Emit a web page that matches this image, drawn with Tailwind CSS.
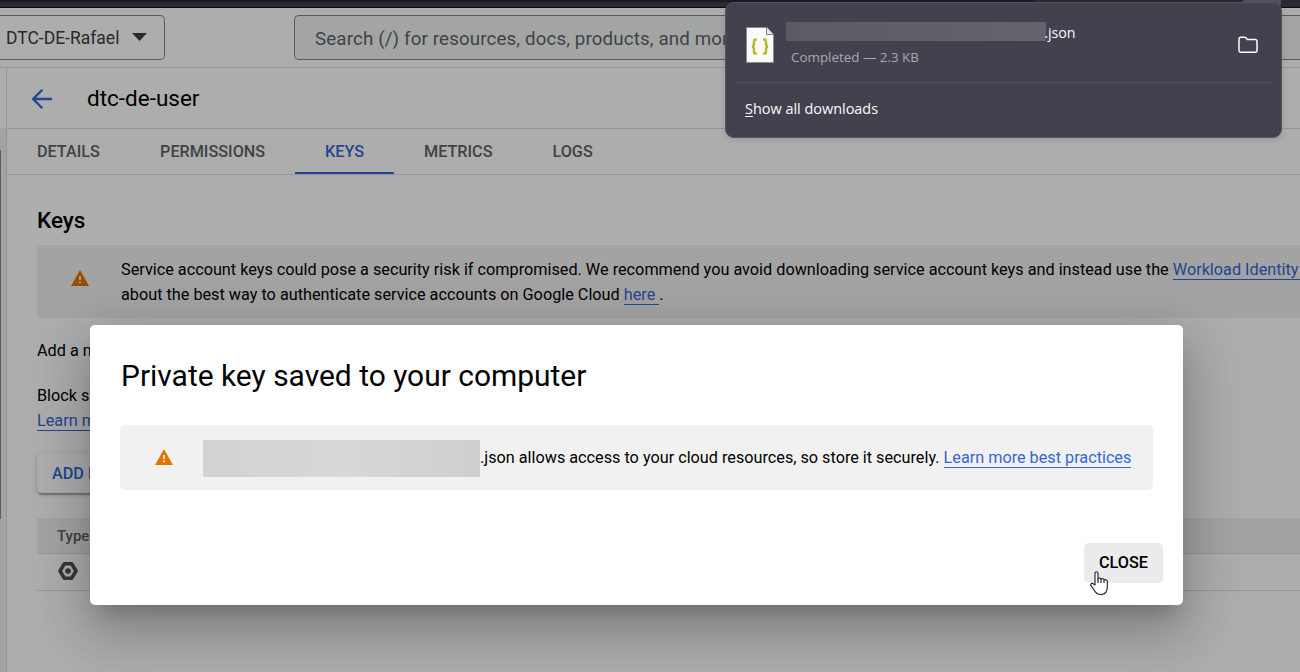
<!DOCTYPE html>
<html lang="en">
<head>
<meta charset="utf-8">
<title>dtc-de-user – Keys</title>
<script src="https://cdn.jsdelivr.net/npm/@tailwindcss/browser@4"></script>
</head>
<body class="relative flex h-[672px] w-[1300px] flex-col overflow-hidden bg-white font-['Roboto',sans-serif] text-[16.242px] leading-[25px] text-black">
  <div class="h-2 shrink-0 border-b border-[#0c0c0d] bg-[#2b2a33]"><div class="h-0.5 w-[1035px] bg-[#1c1b22]"></div></div>

  <header class="flex h-[60px] shrink-0 items-start border-b border-[#dadce0] pt-[7px]">
    <div class="flex h-[45px] w-[165px] items-center rounded-r-[5px] border border-l-0 border-[#80868b] pl-1.5 text-[17.5px] text-[#3c4043]">
      <span class="w-[126px] pt-0.5 whitespace-nowrap">DTC-DE-Rafael</span>
      <svg class="mt-[-2px] h-2 w-[15px]" viewBox="0 0 15 8"><path d="M0 0h15L7.500 8z" fill="#3c4043"/></svg>
    </div>
    <div class="ml-[129px] flex h-[45px] flex-1 items-center rounded-l-[5px] border border-r-0 border-[#80868b] bg-[#f1f3f4] pt-[3px] pl-5 text-[18.75px] tracking-[0.13px] text-[#5f6368]">
      <span class="whitespace-nowrap">Search (/) for resources, docs, products, and more</span>
    </div>
  </header>

  <div class="flex min-h-0 flex-1">
    <aside class="flex w-[7px] shrink-0 flex-col border-r border-[#dadce0]">
      <div class="h-[60px]"></div>
      <div class="flex-1 bg-[#f0f0f0] pt-[22px]"><div class="h-[369px] w-px bg-[#8b8b8b]"></div></div>
    </aside>
    <main class="flex w-[1293px] shrink-0 flex-col overflow-hidden">
      <div class="flex h-[61px] shrink-0 items-center border-b border-[#dadce0] pl-[25px]">
        <svg class="mt-0.5 h-5 w-5" viewBox="0 0 20 20" fill="none" stroke="#3367d6" stroke-width="2.300"><path d="M20 10H2M10.300 .8L1.200 10l9.100 9.200"/></svg>
        <h1 class="ml-[35px] text-[22.5px]">dtc-de-user</h1>
      </div>
      <nav class="flex h-[46px] shrink-0 border-b border-[#dadce0] text-[16.2px] font-medium text-[#5f6368] [&>a]:flex [&>a]:h-[45px] [&>a]:items-center [&>a]:px-[30px]">
        <a>DETAILS</a>
        <a class="ml-[0.2px]">PERMISSIONS</a>
        <a class="border-b-2 border-[#3367d6] pt-0.5 text-[#3367d6]">KEYS</a>
        <a>METRICS</a>
        <a>LOGS</a>
      </nav>
      <section class="flex flex-col pl-[30px]">
        <h2 class="mt-[33px] text-[22.5px] font-medium">Keys</h2>
        <div class="mt-3 flex h-[73px] w-[1400px] items-center rounded-[5px] bg-[#f1f1f1] pl-[33.5px]">
          <svg class="mt-[-7px] h-4 w-[18px] shrink-0" viewBox="0 0 18 16"><path d="M9 0l9 16H0z" fill="#e37400"/><path d="M8.100 6h1.800v4H8.100zM8.100 11.500h1.800v1.800H8.100z" fill="#f1f1f1"/></svg>
          <p class="ml-[32.5px] whitespace-nowrap">Service account keys could pose a security risk if compromised. We recommend you avoid downloading service account keys and instead use the <a class="border-b border-[#3367d6] text-[#3367d6]">Workload Identity Federation</a><br>about the best way to authenticate service accounts on Google Cloud <a class="border-b border-[#3367d6] text-[#3367d6]">here&nbsp;</a>.</p>
        </div>
        <p class="mt-5">Add a new key</p>
        <p class="mt-5">Block service<br><a class="border-b border-[#3367d6] text-[#3367d6]">Learn more</a></p>
        <button class="mt-5 flex h-10 w-[140px] items-center rounded-[5px] bg-white pl-[15px] font-medium text-[#3367d6] shadow-[0_4px_1px_-2px_rgba(0,0,0,.2),0_2px_3px_0_rgba(0,0,0,.14),0_1px_6px_0_rgba(0,0,0,.12)]">ADD KEY</button>
        <div class="mt-[25px] flex h-9 items-center border-b border-[#dadce0] bg-[#f1f1f1] pt-0.5 pl-5 text-[15px] font-medium text-[#5f6368]">Type</div>
        <div class="flex h-[37px] items-center border-b border-[#dadce0] pb-0.5 pl-[21px]">
          <svg class="h-[18px] w-5" viewBox="0 0 20 18"><path d="M6.300 1.800h7.400L18 9l-4.300 7.200H6.300L2 9z" fill="none" stroke="#505050" stroke-width="3.600" stroke-linejoin="round"/><circle cx="10" cy="9" r="2.800" fill="#505050"/></svg>
        </div>
      </section>
    </main>
  </div>

  <div class="absolute inset-x-0 top-2 bottom-0 bg-black/32"></div>

  <div class="absolute top-[325px] left-[90px] flex h-[280px] w-[1093px] flex-col rounded-[5px] bg-white pl-[30px] shadow-[0_14px_19px_-9px_rgba(0,0,0,.2),0_30px_48px_4px_rgba(0,0,0,.14),0_11px_58px_10px_rgba(0,0,0,.12)]" role="dialog">
    <h2 class="mt-8 pl-px text-[29.95px] leading-[38px]">Private key saved to your computer</h2>
    <div class="mt-[30px] flex h-[65px] w-[1033px] items-center rounded-[5px] bg-[#f1f1f1] pl-[34.5px]">
      <svg class="mt-[-2px] h-4 w-[18px] shrink-0" viewBox="0 0 18 16"><path d="M9 0l9 16H0z" fill="#e37400"/><path d="M8.100 6h1.800v4H8.100zM8.100 11.500h1.800v1.800H8.100z" fill="#f1f1f1"/></svg>
      <div class="mt-0.5 ml-[30.5px] h-[37px] w-[277px] bg-linear-to-r from-[#d2d2d2] via-[#d8d8d8] to-[#cecece]"></div>
      <p class="text-[16.225px] whitespace-nowrap">.json allows access to your cloud resources, so store it securely. <a class="border-b border-[#3367d6] text-[#3367d6]">Learn more best practices</a></p>
    </div>
    <button class="mt-[53px] mr-5 flex h-10 w-[79px] items-center justify-center self-end rounded-[5px] bg-[#ebebeb] pb-0.5 font-medium">CLOSE</button>
  </div>

  <svg class="absolute top-[571px] left-[1090px] h-6 w-[18px]" viewBox="0 0 18 24"><path d="M5 14V2.200C5 .3 8 .3 8 2.200V8c.3-1.400 3-1.300 3 .4 .5-1.200 3-1 3 .8 .7-1 3.300-.6 3.300 1.200V16c0 4.500-2.500 7.500-6.600 7.500-3.400 0-5-1.500-6.300-4L.9 14.400C.2 12.800 2.300 11.600 3.500 13z" fill="#fff" stroke="#1c1b2e" stroke-width="1.100" stroke-linejoin="round"/><path d="M8 7.500V12M11 8.500V12M14 9.500V12" stroke="#1c1b2e" stroke-width="1.100"/></svg>

  <div class="absolute top-0 left-[1243px] h-2 w-[38px] rounded-b-[5px] bg-[#52525e]"></div>
  <div class="absolute top-0.5 left-[725px] flex h-[136px] w-[557px] flex-col rounded-[9px] border border-[#52525e] bg-[#42414d] px-[9px] font-['Open_Sans','Noto_Sans',sans-serif] text-[#fbfbfe] shadow-[0_2px_6px_rgba(0,0,0,.12)]">
    <div class="flex h-20 border-b border-[#52525e]">
      <svg class="mt-6 ml-[11px] h-9 w-7" viewBox="0 0 28 36"><path d="M.5 .5h20.500L27.500 7.500V35.500H.5z" fill="#fafafa" stroke="#8c8c88"/><path d="M20.500 .5v7h7" fill="#e8e8e8" stroke="#85857f"/><path d="M10.800 12.500H10c-1.500 0-2 .8-2 2v2.500c0 1.500-.6 2.300-2 2.500 1.400 .2 2 1 2 2.500v2.500c0 1.300 .5 2 2 2h.8M17.200 12.500h.8c1.500 0 2 .8 2 2v2.500c0 1.500 .6 2.300 2 2.500-1.400 .2-2 1-2 2.500v2.500c0 1.300-.5 2-2 2h-.8" fill="none" stroke="#b5b82e" stroke-width="2.400"/></svg>
      <div class="ml-3 flex flex-col">
        <div class="mt-[19px] flex h-[19px] items-center text-[14.3px]"><span class="h-[19px] w-[260px] bg-linear-to-r from-[#5b5a65] to-[#64636e]"></span><span class="-ml-[1.5px] mt-px tracking-[-0.15px]">.json</span></div>
        <div class="mt-1.5 pl-[5px] text-[13.4px] leading-5 text-[#a9a8b0]">Completed — 2.3 KB</div>
      </div>
      <svg class="mt-[33px] mr-[14.5px] ml-auto h-[18px] w-5" viewBox="0 0 20 18" fill="none" stroke="#fbfbfe" stroke-width="1.500" stroke-linejoin="round"><path d="M1 3.200C1 2 1.700 1.200 2.900 1.200h3.600c.6 0 1 .2 1.400 .6l1.500 1.700h7.700c1.200 0 1.900 .8 1.900 1.900v8.900c0 1.200-.7 1.900-1.900 1.900H2.900C1.700 16.200 1 15.500 1 14.300z"/></svg>
    </div>
    <div class="mt-[13px] pl-2.5 text-[14.45px]"><span class="underline underline-offset-2">S</span>how all downloads</div>
  </div>
</body>
</html>
